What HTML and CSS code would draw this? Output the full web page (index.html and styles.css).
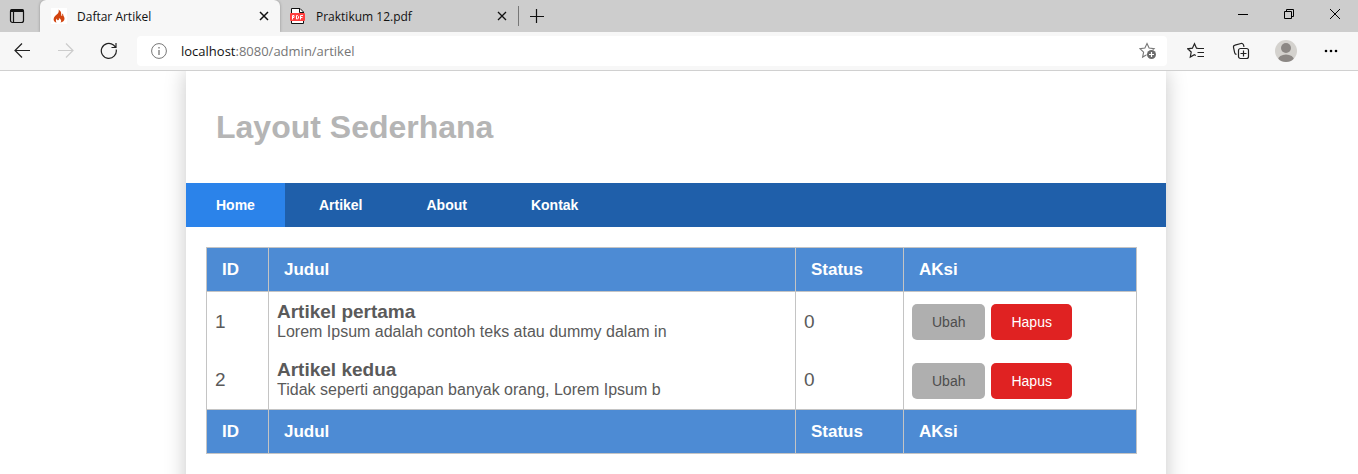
FILE: index.html
```html
<!DOCTYPE html>
<html lang="id">
<head>
<meta charset="utf-8">
<title>Daftar Artikel</title>
<link rel="stylesheet" href="styles.css">
</head>
<body>
<div class="browser">
  <div class="tabbar">
    <button class="tab-actions" aria-label="Tab actions">
      <svg width="16" height="16" viewBox="0 0 16 16"><rect x="1.5" y="1.5" width="13" height="13" rx="2" fill="none" stroke="#111" stroke-width="1.2"/><path d="M1 4V3a2 2 0 0 1 2-2h10a2 2 0 0 1 2 2v1z" fill="#111"/><path d="M4.5 4v10" stroke="#111" stroke-width="1.2"/></svg>
    </button>
    <div class="tab tab-active">
      <span class="favicon"><svg width="16" height="16" viewBox="0 0 16 16"><path d="M7.400 1.500c.8 1.300.4 2.900-.8 4.300C5.300 7.300 2.600 8.600 2.600 11.200c0 1.700 1.200 2.900 3 3.400C4.500 13.200 4.700 11.700 6 10.500c-.2 1.100.4 1.800 1 1.800 1.100 0 1.200-1.100.8-2.300 1.900.9 3.400 2.900 1.600 4.600 2.400-.4 4.200-1.800 4.100-4 0-1.900-1.600-2.700-1.500-5-.9.5-1 1.400-.7 2.400-.8-.1-1.200-.7-1.100-1.600.3-2.100-.8-3.900-2.800-4.900z" fill="#d2440f"/></svg></span>
      <span class="tab-title">Daftar Artikel</span>
      <button class="tab-close" aria-label="Close tab"><svg width="10" height="10" viewBox="0 0 10 10"><path d="M1 1l8 8M9 1L1 9" stroke="#111" stroke-width="1.5"/></svg></button>
    </div>
    <div class="tab">
      <span class="favicon favicon-pdf"><svg width="16" height="16" viewBox="0 0 16 16"><path d="M1.500 15.500V.5h8.500l3.500 3.500v11.500z" fill="#fff" stroke="#111"/><path d="M9.500.5V4.500h4" fill="none" stroke="#111"/><rect x="0" y="5" width="15" height="8" rx="1" fill="#ff3f3f"/><path d="M2.500 11.500V7.500h1.500v2H2.500M6.500 7.500v3.500h1l1-1V8.500l-1-1zM10.500 11.500v-4h2.500M10.500 9.500h2" fill="none" stroke="#fff"/></svg></span>
      <span class="tab-title">Praktikum 12.pdf</span>
      <button class="tab-close" aria-label="Close tab"><svg width="10" height="10" viewBox="0 0 10 10"><path d="M1 1l8 8M9 1L1 9" stroke="#111" stroke-width="1.300"/></svg></button>
    </div>
    <button class="new-tab" aria-label="New tab"><svg width="14" height="14" viewBox="0 0 14 14"><path d="M6.500 0v14M0 7.500h14" stroke="#111" stroke-width="1.200"/></svg></button>
    <div class="window-controls">
      <button aria-label="Minimize"><svg width="10" height="10" viewBox="0 0 10 10"><path d="M0 5.500h10" stroke="#000"/></svg></button>
      <button aria-label="Restore"><svg width="10" height="10" viewBox="0 0 10 10"><path d="M.5 2.500h7v7h-7zM2.500 2.500v-2h7v7h-2" fill="none" stroke="#000"/></svg></button>
      <button aria-label="Close"><svg width="10" height="10" viewBox="0 0 10 10"><path d="M0 0l10 10M10 0L0 10" stroke="#000"/></svg></button>
    </div>
  </div>
  <div class="toolbar">
    <div class="nav-buttons">
      <button aria-label="Back"><svg width="16" height="16" viewBox="0 0 16 16"><path d="M16 7.500H1M8 .5l-7 7 7 7" fill="none" stroke="#222" stroke-width="1.200"/></svg></button>
      <button aria-label="Forward" disabled><svg width="16" height="16" viewBox="0 0 16 16"><path d="M0 7.500h15M8 .5l7 7-7 7" fill="none" stroke="#ccc" stroke-width="1.200"/></svg></button>
      <button aria-label="Refresh"><svg width="18" height="18" viewBox="0 0 18 18"><path d="M16.200 7.500A7.500 7.500 0 1 1 13.500 3L16 5.500M16 1v4.500h-4.500" fill="none" stroke="#222" stroke-width="1.200"/></svg></button>
    </div>
    <div class="address">
      <svg width="16" height="16" viewBox="0 0 16 16"><circle cx="8" cy="8" r="7.400" fill="none" stroke="#777"/><path d="M8 7v5M8 4v1.500" stroke="#777" stroke-width="1.300"/></svg>
      <span class="url">localhost<span class="url-path">:8080/admin/artikel</span></span>
      <button aria-label="Add to favorites"><svg width="18" height="18" viewBox="0 0 18 18"><path d="M8 1.500l2.100 4.600 5 .6-3.700 3.400 1 5L8 12.600l-4.400 2.500 1-5L.9 6.700l5-.6z" fill="none" stroke="#777" stroke-width="1.100"/><circle cx="12.500" cy="12.500" r="5" fill="#fff"/><circle cx="12.500" cy="12.500" r="4.500" fill="#6a6a6a"/><path d="M12.500 10v5M10 12.500h5" stroke="#fff" stroke-width="1.200"/></svg></button>
    </div>
    <div class="tools">
      <button aria-label="Favorites"><svg width="18" height="18" viewBox="0 0 18 18"><path d="M11.500 6.500L9.500 6.200 7.500 1.700 5.400 6.200l-4.700.6L4.200 10l-.9 5L7.300 12.700l1.500.8" fill="none" stroke="#222" stroke-width="1.200"/><path d="M11 6.500h6M10.500 10.500H17M10.500 14.500H17" stroke="#222" stroke-width="1.200"/></svg></button>
      <button aria-label="Collections"><svg width="18" height="18" viewBox="0 0 18 18"><path d="M4.500 12.300a2 2 0 0 1-1.800-1.500L1.500 5.500A2 2 0 0 1 3 3.200L9 1.500a2 2 0 0 1 2.500 1.400l.5 2" fill="none" stroke="#222" stroke-width="1.200"/><rect x="6.500" y="6.500" width="10" height="10" rx="2" fill="none" stroke="#222" stroke-width="1.200"/><path d="M11.500 8.500v6M8.500 11.500h6" stroke="#222" stroke-width="1.200"/></svg></button>
      <button aria-label="Profile"><svg width="22" height="22" viewBox="0 0 22 22"><defs><clipPath id="avatar"><circle cx="11" cy="11" r="11"/></clipPath></defs><g clip-path="url(#avatar)"><rect width="22" height="22" fill="#d4d2ce"/><circle cx="11" cy="8" r="5" fill="#8c8885"/><ellipse cx="11" cy="20" rx="8" ry="5.500" fill="#8c8885"/></g></svg></button>
      <button aria-label="Settings and more"><svg width="14" height="4" viewBox="0 0 14 4"><circle cx="2" cy="2" r="1.300"/><circle cx="7" cy="2" r="1.300"/><circle cx="12" cy="2" r="1.300"/></svg></button>
    </div>
  </div>
</div>
<div class="page">
  <div class="container">
    <header class="site-header"><h1>Layout Sederhana</h1></header>
    <nav class="site-nav">
      <a class="active" href="#">Home</a>
      <a href="#">Artikel</a>
      <a href="#">About</a>
      <a href="#">Kontak</a>
    </nav>
    <main class="content">
      <table class="table">
        <thead>
          <tr><th class="col-id">ID</th><th>Judul</th><th class="col-status">Status</th><th class="col-action">AKsi</th></tr>
        </thead>
        <tbody>
          <tr>
            <td>1</td>
            <td><b>Artikel pertama</b><p>Lorem Ipsum adalah contoh teks atau dummy dalam in</p></td>
            <td>0</td>
            <td><div class="actions"><a class="btn" href="#">Ubah</a><a class="btn btn-danger" href="#">Hapus</a></div></td>
          </tr>
          <tr>
            <td>2</td>
            <td><b>Artikel kedua</b><p>Tidak seperti anggapan banyak orang, Lorem Ipsum b</p></td>
            <td>0</td>
            <td><div class="actions"><a class="btn" href="#">Ubah</a><a class="btn btn-danger" href="#">Hapus</a></div></td>
          </tr>
        </tbody>
        <tfoot>
          <tr><th>ID</th><th>Judul</th><th>Status</th><th>AKsi</th></tr>
        </tfoot>
      </table>
    </main>
  </div>
</div>
</body>
</html>
```
FILE: styles.css
```css
* { box-sizing: border-box; }
body {
  margin: 0;
  height: 100vh;
  display: flex;
  flex-direction: column;
  background: #fff;
  color: #5a5a5a;
  font-family: "Liberation Sans", Arial, sans-serif;
}
button {
  display: flex;
  align-items: center;
  justify-content: center;
  padding: 0;
  border: 0;
  background: none;
}
.browser {
  font-family: "Open Sans", "Noto Sans", sans-serif;
  color: #111;
  border-bottom: 1px solid #d0d0d0;
}
.tabbar {
  display: flex;
  height: 32px;
  background: #cdcdcd;
}
.tab-actions { width: 34px; margin-right: 6px; }
.tab {
  display: flex;
  align-items: center;
  width: 238px;
  padding: 0 11px 0 10px;
  font-size: 12px;
}
.tab-active {
  width: 240px;
  padding-left: 11px;
  background: #f7f7f7;
  border-radius: 6px 6px 0 0;
  box-shadow: 0 0 3px rgba(0, 0, 0, .3);
}
.favicon { display: flex; margin-right: 10px; background: #fff; }
.favicon-pdf { background: none; }
.tab-title { flex: 1; }
.tab-close { width: 10px; height: 20px; }
.new-tab {
  align-self: center;
  width: 36px;
  height: 20px;
  border-left: 1px solid #777;
}
.window-controls { display: flex; margin-left: auto; padding-bottom: 4px; }
.window-controls button { width: 46px; }
.toolbar {
  position: relative;
  display: flex;
  align-items: center;
  height: 38px;
  background: #f7f7f7;
}
.nav-buttons { display: flex; width: 137px; padding-right: 6px; }
.nav-buttons button { width: 44px; height: 30px; }
.address {
  flex: 1;
  display: flex;
  align-items: center;
  height: 30px;
  padding: 0 10px 0 14px;
  background: #fff;
  border-radius: 4px;
  font-size: 13px;
}
.url { flex: 1; margin-left: 14px; }
.url-path { color: #767676; }
.tools { display: flex; padding-right: 5px; margin-left: 6px; }
.tools button { width: 45px; height: 30px; }
.page {
  flex: 1;
  min-height: 0;
  padding-right: 6px;
  overflow: hidden;
}
.container {
  max-width: 980px;
  margin: 0 auto;
  background: #fff;
  box-shadow: 0 0 20px rgba(0, 0, 0, .22);
}
.site-header { padding: 36px 30px; }
h1 { margin: 0; font-size: 32px; line-height: 40px; color: #b5b5b5; }
.site-nav { display: flex; gap: 4px; background: #1f5faa; }
.site-nav a {
  padding: 12px 30px;
  font-size: 14px;
  line-height: 20px;
  font-weight: bold;
  color: #fff;
  text-decoration: none;
}
.site-nav .active { background: #2b83ea; }
.content { padding: 20px 29px 60px 20px; }
.table {
  width: 100%;
  table-layout: fixed;
  border-collapse: collapse;
  border: 1px solid #c4c4c4;
}
.col-id { width: 62px; }
.col-status { width: 108px; }
.col-action { width: 233px; }
th {
  padding: 11px 15px;
  border: 1px solid #c4c4c4;
  background: #4d8bd4;
  color: #fff;
  font-size: 17px;
  line-height: 21px;
  text-align: left;
}
td {
  height: 59px;
  padding: 8px;
  border: solid #c4c4c4;
  border-width: 0 1px;
  font-size: 19px;
  line-height: 21px;
}
td b { display: block; }
td p { margin: 0; font-size: 16px; line-height: 20px; }
.actions { display: flex; gap: 6px; padding-top: 2px; }
.btn {
  padding: 8px 20px;
  border-radius: 5px;
  background: #afafaf;
  color: #4d4d4d;
  font-size: 14px;
  line-height: 20px;
  text-decoration: none;
}
.btn-danger { background: #e02222; color: #fff; }
```
